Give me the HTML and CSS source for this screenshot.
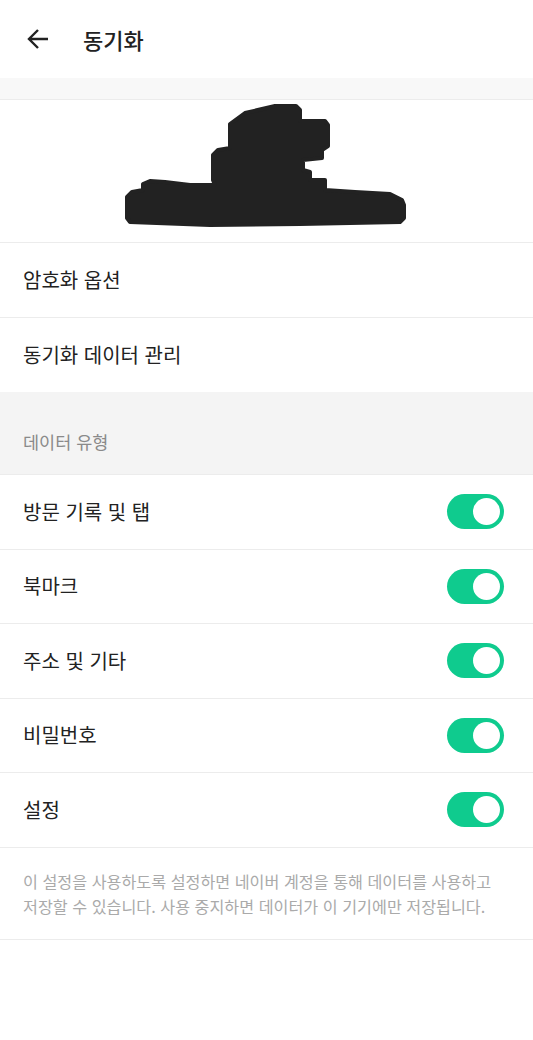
FILE: index.html
```html
<!DOCTYPE html>
<html lang="ko">
<head>
<meta charset="utf-8">
<title>동기화</title>
<link rel="stylesheet" href="styles.css">
</head>
<body>
<div class="page">
  <header class="topbar">
    <svg class="back" width="24" height="24" viewBox="0 0 24 24" aria-hidden="true">
      <path d="M22 12H3.5M12 3L3 12l9 9" fill="none" stroke="#222" stroke-width="2.4" stroke-linecap="butt" stroke-linejoin="miter"/>
    </svg>
    <h1 class="title">동기화</h1>
  </header>
  <div class="band"></div>
  <section class="account">
    <svg class="redact" width="533" height="142" viewBox="0 100 533 142" aria-hidden="true">
      <path d="M230 124 L245 113 L275 106 L296 106 L300 110 L300 121 L325 121 L328 125 L328 146 L322 150 L322 158 L303 160 L303 170 L310 172 L310 180 L325 180 L325 190 L355 192 L390 194 L402 200 L404 205 L404 218 L400 222 L300 224 L210 225 L130 222 L127 218 L127 197 L132 192 L143 190 L143 184 L150 181 L165 182 L190 185 L215 185 L213 180 L213 155 L218 150 L230 148 Z" fill="#222" stroke="#222" stroke-width="4" stroke-linejoin="round"/>
    </svg>
  </section>
  <div class="row link">암호화 옵션</div>
  <div class="row link">동기화 데이터 관리</div>
  <div class="section-label">데이터 유형</div>
  <div class="row toggle-row"><span>방문 기록 및 탭</span><span class="switch"><span class="knob"></span></span></div>
  <div class="row toggle-row"><span>북마크</span><span class="switch"><span class="knob"></span></span></div>
  <div class="row toggle-row"><span>주소 및 기타</span><span class="switch"><span class="knob"></span></span></div>
  <div class="row toggle-row"><span>비밀번호</span><span class="switch"><span class="knob"></span></span></div>
  <div class="row toggle-row"><span>설정</span><span class="switch"><span class="knob"></span></span></div>
  <p class="note">이 설정을 사용하도록 설정하면 네이버 계정을 통해 데이터를 사용하고 저장할 수 있습니다. 사용 중지하면 데이터가 이 기기에만 저장됩니다.</p>
</div>
</body>
</html>
```
FILE: styles.css
```css
* { box-sizing: border-box; }
html, body { margin: 0; padding: 0; background: #fff; }
body {
  font-family: "Noto Sans CJK KR", "Noto Sans", sans-serif;
  color: #222;
}
.page { width: 533px; }
.topbar {
  height: 78px;
  display: flex;
  align-items: center;
  padding-left: 26px;
}
.back { display: block; }
.title {
  margin: 0 0 0 33px;
  font-size: 22px;
  font-weight: 500;
  line-height: 28px;
  color: #222;
}
.band {
  height: 22px;
  background: #f8f8f8;
  border-bottom: 1px solid #ececec;
}
.account {
  height: 143px;
  border-bottom: 1px solid #ececec;
}
.redact { display: block; }
.row {
  display: flex;
  align-items: center;
  justify-content: space-between;
  padding: 0 29px 0 23px;
  font-size: 20px;
  line-height: 26px;
  color: #222;
  border-bottom: 1px solid #ececec;
}
.link { height: 75px; }
.section-label {
  height: 83px;
  margin-top: -1px;
  background: #f4f4f4;
  display: flex;
  align-items: flex-end;
  padding: 0 23px 20px;
  font-size: 17.5px;
  line-height: 24px;
  color: #8a8a8a;
  border-bottom: 1px solid #ececec;
}
.toggle-row { height: 74.5px; }
.switch {
  width: 57px;
  height: 35px;
  border-radius: 18px;
  background: #0fcb8e;
  display: flex;
  align-items: center;
  justify-content: flex-end;
  padding-right: 4px;
}
.knob {
  width: 27px;
  height: 27px;
  border-radius: 50%;
  background: #fff;
}
.note {
  margin: 0;
  padding: 21px 23px 20px;
  font-size: 16.2px;
  line-height: 25px;
  color: #aaa;
  border-bottom: 1px solid #ececec;
}
```
